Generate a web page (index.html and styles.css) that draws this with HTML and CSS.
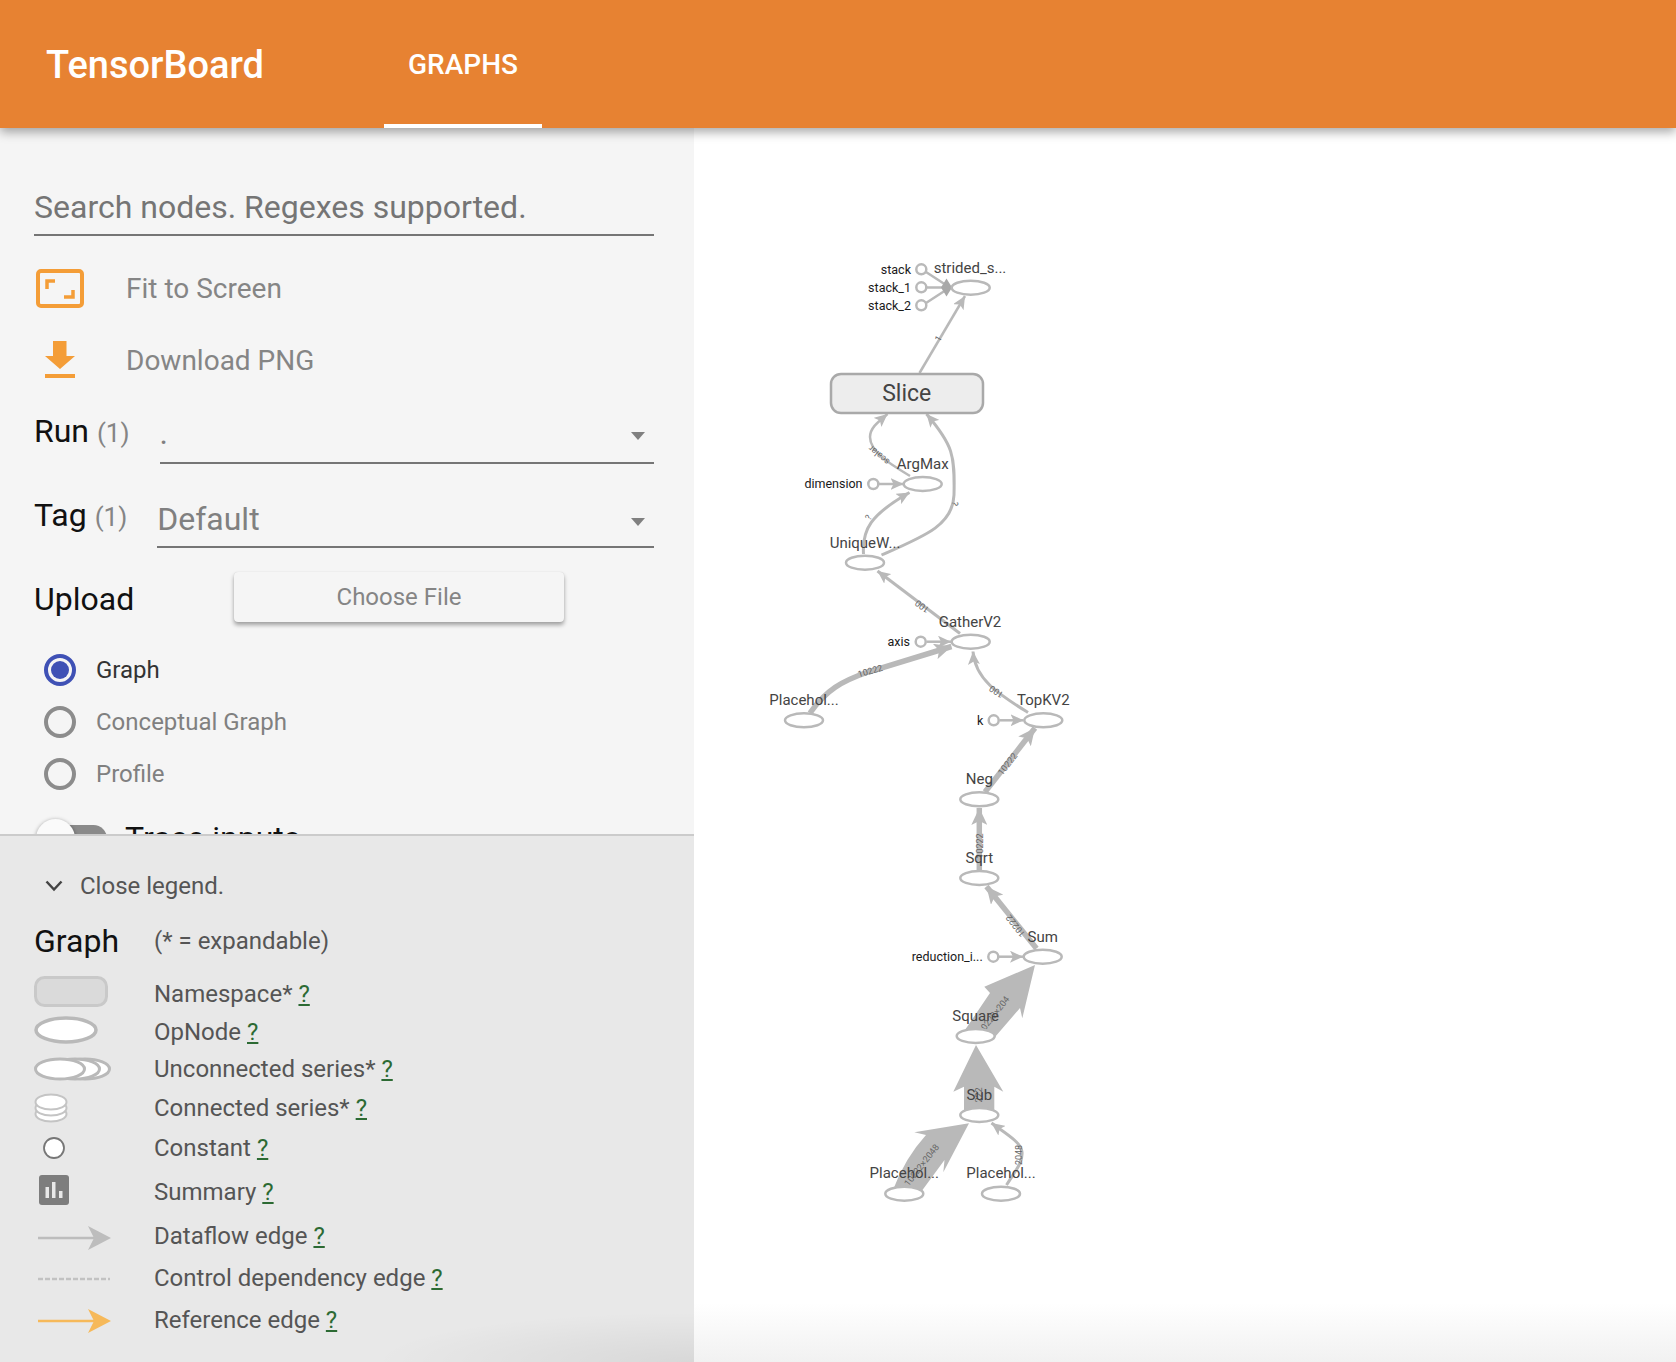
FILE: index.html
```html
<!DOCTYPE html>
<html lang="en">
<head>
    <meta charset="UTF-8">
    <title>TensorBoard</title>
    <link rel="stylesheet" href="styles.css">
</head>
<body>
    <header class="topbar">
        <div class="brand">TensorBoard</div>
        <div class="tab">GRAPHS</div>
    </header>

    <div class="main">
        <aside class="sidebar">
            <div class="controls">
                <div class="search">Search nodes. Regexes supported.</div>

                <div class="tools">
                    <div class="tool-row">
                        <svg class="tool-icon" width="48" height="39" viewBox="0 0 48 39">
                            <rect x="2" y="2" width="44" height="35" rx="3" fill="none" stroke="#f49d37" stroke-width="4"/>
                            <path d="M11 20V12H19M37 21V28H28" fill="none" stroke="#f49d37" stroke-width="3.5"/>
                        </svg>
                        <span>Fit to Screen</span>
                    </div>
                    <div class="tool-row">
                        <svg class="tool-icon download-icon" width="48" height="37" viewBox="0 0 48 37">
                            <path d="M17 0H30.500V15H39L24 28L9 15H17Z" fill="#f49d37"/>
                            <rect x="9" y="33" width="30" height="4" fill="#f49d37"/>
                        </svg>
                        <span>Download PNG</span>
                    </div>
                </div>

                <div class="pick-row run-row">
                    <div class="pick-label">Run <span class="count">(1)</span></div>
                    <div class="select"><span>.</span><i class="caret"></i></div>
                </div>
                <div class="pick-row tag-row">
                    <div class="pick-label">Tag <span class="count">(1)</span></div>
                    <div class="select"><span>Default</span><i class="caret"></i></div>
                </div>

                <div class="upload-row">
                    <div class="upload-label">Upload</div>
                    <div class="file-btn">Choose File</div>
                </div>

                <div class="radios">
                    <div class="radio-row on"><i class="radio"></i><span>Graph</span></div>
                    <div class="radio-row"><i class="radio"></i><span>Conceptual Graph</span></div>
                    <div class="radio-row"><i class="radio"></i><span>Profile</span></div>
                </div>

                <div class="toggle-row">
                    <div class="toggle"><i class="knob"></i></div>
                    <span>Trace inputs</span>
                </div>
            </div>

            <div class="legend">
                <div class="legend-toggle">
                    <svg width="18" height="12" viewBox="0 0 18 12">
                        <path d="M1.500 1.500L9 9.500L16.500 1.500" fill="none" stroke="#444" stroke-width="2.500"/>
                    </svg>
                    <span>Close legend.</span>
                </div>
                <div class="legend-head">
                    <div class="legend-title">Graph</div>
                    <div>(* = expandable)</div>
                </div>
                <div class="legend-grid">
                    <svg class="up-2" width="76" height="32" viewBox="0 0 76 32">
                        <rect x="1.500" y="1.500" width="71" height="28" rx="9" fill="#dadada" stroke="#c9c9c9" stroke-width="3"/>
                    </svg>
                    <div>Namespace* <a>?</a></div>

                    <svg class="up-2" width="66" height="28" viewBox="0 0 66 28">
                        <ellipse cx="32" cy="14" rx="30" ry="12" fill="#fff" stroke="#b9b9b9" stroke-width="3.500"/>
                    </svg>
                    <div>OpNode <a>?</a></div>

                    <svg width="78" height="24" viewBox="0 0 78 24">
                        <ellipse cx="51" cy="12" rx="24.500" ry="10" fill="#fff" stroke="#b9b9b9" stroke-width="3"/>
                        <ellipse cx="41" cy="12" rx="24.500" ry="10" fill="#fff" stroke="#b9b9b9" stroke-width="3"/>
                        <ellipse cx="26" cy="12" rx="24.500" ry="10" fill="#fff" stroke="#b9b9b9" stroke-width="3"/>
                    </svg>
                    <div>Unconnected series* <a>?</a></div>

                    <svg width="36" height="30" viewBox="0 0 36 30">
                        <ellipse cx="17" cy="21" rx="15.500" ry="7.500" fill="#fff" stroke="#c4c4c4" stroke-width="2"/>
                        <ellipse cx="17" cy="15" rx="15.500" ry="7.500" fill="#fff" stroke="#c4c4c4" stroke-width="2"/>
                        <ellipse cx="17" cy="9" rx="15.500" ry="7.500" fill="#fff" stroke="#c4c4c4" stroke-width="2"/>
                    </svg>
                    <div>Connected series* <a>?</a></div>

                    <svg class="constant-icon" width="24" height="24" viewBox="0 0 24 24">
                        <circle cx="12" cy="12" r="10" fill="#fff" stroke="#777" stroke-width="1.800"/>
                    </svg>
                    <div>Constant <a>?</a></div>

                    <svg class="summary-icon" width="30" height="30" viewBox="0 0 30 30">
                        <rect width="30" height="30" rx="3" fill="#7d7d7d"/>
                        <rect x="6.500" y="12" width="3.500" height="11" fill="#e8e8e8"/>
                        <rect x="13" y="7" width="3.500" height="16" fill="#e8e8e8"/>
                        <rect x="20" y="16" width="3.500" height="7" fill="#e8e8e8"/>
                    </svg>
                    <div>Summary <a>?</a></div>

                    <svg class="edge-icon down-2" width="76" height="24" viewBox="0 0 76 24">
                        <path d="M0 12H60" stroke="#bdbdbd" stroke-width="2.500"/>
                        <path d="M50 0L73 12L50 24L56 12Z" fill="#bdbdbd"/>
                    </svg>
                    <div>Dataflow edge <a>?</a></div>

                    <svg class="edge-icon down-1" width="76" height="4" viewBox="0 0 76 4">
                        <path d="M0 2H72" stroke="#c2c2c2" stroke-width="2.500" stroke-dasharray="5 2"/>
                    </svg>
                    <div>Control dependency edge <a>?</a></div>

                    <svg class="edge-icon down-1" width="76" height="24" viewBox="0 0 76 24">
                        <path d="M0 12H60" stroke="#f6b95a" stroke-width="2.500"/>
                        <path d="M50 0L73 12L50 24L56 12Z" fill="#f6b95a"/>
                    </svg>
                    <div>Reference edge <a>?</a></div>
                </div>
            </div>
        </aside>

        <main class="canvas">
            <!-- viewBox uses page coordinates so the nodes read like the screenshot -->
            <svg class="graph" width="982" height="1234" viewBox="694 128 982 1234">
                <defs>
                    <marker id="head" markerUnits="userSpaceOnUse" markerWidth="14" markerHeight="12" refX="13" refY="6" orient="auto">
                        <path d="M0 0L13 6L0 12L3 6Z" fill="#b9b9b9"/>
                    </marker>
                    <marker id="head-wide" markerUnits="userSpaceOnUse" markerWidth="18" markerHeight="16" refX="17" refY="8" orient="auto">
                        <path d="M0 0L17 8L0 16L4 8Z" fill="#b9b9b9"/>
                    </marker>
                </defs>

                <g class="edges">
                    <path d="M926 272L946 285"/>
                    <path d="M927 287.500H946"/>
                    <path d="M926 303L946 290"/>
                    <polygon class="diamond" points="941,287.500 946.500,278.500 952,287.500 946.500,296.500"/>
                    <path d="M919.500 373L965 296" marker-end="url(#head)"/>
                    <path d="M910 476C890 464 870 452 870 437C870 428 878 422 887.500 414" marker-end="url(#head)"/>
                    <path d="M879 484H903.500" marker-end="url(#head)"/>
                    <path class="w3" d="M863.500 554C862 530 870 515 909.500 492.500" marker-end="url(#head)"/>
                    <path class="w3" d="M881.500 555C925 536 953 525 954 495C955 455 953 445 926.500 414" marker-end="url(#head)"/>
                    <path class="w3" d="M960 633.500L877.500 571" marker-end="url(#head)"/>
                    <path d="M926.500 641.700H951" marker-end="url(#head)"/>
                    <path class="w5" d="M810 713C826 690 842 681 868 672L951.500 646.500" marker-end="url(#head-wide)"/>
                    <path class="w3" d="M1028 712.500C1000 695 975 680 973 651.500" marker-end="url(#head)"/>
                    <path d="M999.500 720.300H1023.500" marker-end="url(#head)"/>
                    <path class="w5" d="M985 792L1035 728" marker-end="url(#head-wide)"/>
                    <path class="w5" d="M979.300 870V808" marker-end="url(#head-wide)"/>
                    <path class="w5" d="M1036.500 948.500L986.500 886.500" marker-end="url(#head-wide)"/>
                    <path d="M999 956.700H1023" marker-end="url(#head)"/>
                    <path class="w3" d="M1006.500 1185C1016 1170 1023 1162 1022 1152C1021 1142 1005 1133 991.500 1123" marker-end="url(#head)"/>
                    <polygon class="big" points="1035,965 1022.300,1018.300 1020,1008 995,1037 965,1030 990,993 984.300,986.700"/>
                    <polygon class="big" points="976,1045 1003.300,1091.700 994.300,1086.700 994.300,1110 964,1110 964,1086.700 953.300,1091.700"/>
                    <path class="big" d="M969 1123.300L914.300 1132.300L926 1135Q905 1158 893 1190L921 1192L944.500 1160L943.300 1172.300Z"/>
                </g>

                <g class="edge-labels">
                    <text transform="translate(941 340) rotate(-60)">1</text>
                    <text transform="translate(881 453) rotate(220)">scalar</text>
                    <text transform="translate(871 519) rotate(-60)">?</text>
                    <text transform="translate(952 503) rotate(100)">?</text>
                    <text transform="translate(924 604) rotate(217)">100</text>
                    <text transform="translate(871 674) rotate(-16)">10222</text>
                    <text transform="translate(998 689) rotate(213)">100</text>
                    <text transform="translate(1010 766) rotate(-52)">10222</text>
                    <text transform="translate(983 846) rotate(-90)">10222</text>
                    <text transform="translate(1018 924) rotate(232)">10222</text>
                    <text transform="translate(996 1017) rotate(-52)">10222×204</text>
                    <text transform="translate(982 1095) rotate(-90)">222</text>
                    <text transform="translate(924 1167) rotate(-52)">10222×2048</text>
                    <text transform="translate(1022 1155) rotate(-90)">2048</text>
                </g>

                <rect class="meta-node" x="831" y="374" width="152" height="39" rx="10"/>

                <g class="op-nodes">
                    <ellipse cx="970.700" cy="287.700" rx="19" ry="7"/>
                    <ellipse cx="922.700" cy="484" rx="19" ry="7"/>
                    <ellipse cx="865" cy="562.700" rx="19" ry="7"/>
                    <ellipse cx="970.700" cy="641.700" rx="19" ry="7"/>
                    <ellipse cx="804" cy="720.300" rx="19" ry="7"/>
                    <ellipse cx="1043.300" cy="720.300" rx="19" ry="7"/>
                    <ellipse cx="979.300" cy="799.300" rx="19" ry="7"/>
                    <ellipse cx="979.300" cy="878" rx="19" ry="7"/>
                    <ellipse cx="1042.700" cy="956.700" rx="19" ry="7"/>
                    <ellipse cx="975.700" cy="1036" rx="19" ry="7"/>
                    <ellipse cx="979.300" cy="1115" rx="19" ry="7"/>
                    <ellipse cx="904.300" cy="1193.700" rx="19" ry="7"/>
                    <ellipse cx="1001" cy="1193.700" rx="19" ry="7"/>
                </g>

                <g class="const-nodes">
                    <circle cx="921.300" cy="269.300" r="5"/>
                    <circle cx="921.300" cy="287.300" r="5"/>
                    <circle cx="921.300" cy="305.300" r="5"/>
                    <circle cx="873.300" cy="484" r="5"/>
                    <circle cx="920.700" cy="641.700" r="5"/>
                    <circle cx="993.700" cy="720.300" r="5"/>
                    <circle cx="993.300" cy="956.700" r="5"/>
                </g>

                <g class="const-labels">
                    <text x="911" y="274">stack</text>
                    <text x="911" y="292">stack_1</text>
                    <text x="911" y="310">stack_2</text>
                    <text x="862.500" y="488">dimension</text>
                    <text x="910" y="646">axis</text>
                    <text x="983.300" y="725">k</text>
                    <text x="982.700" y="961">reduction_i...</text>
                </g>

                <g class="node-labels">
                    <text x="970" y="273">strided_s...</text>
                    <text x="922.700" y="468.500">ArgMax</text>
                    <text x="865" y="548">UniqueW...</text>
                    <text x="970" y="627">GatherV2</text>
                    <text x="804" y="704.500">Placehol...</text>
                    <text x="1043.300" y="704.500">TopKV2</text>
                    <text x="979.300" y="783.500">Neg</text>
                    <text x="979.300" y="863">Sqrt</text>
                    <text x="1042.700" y="942">Sum</text>
                    <text x="975.700" y="1021">Square</text>
                    <text x="979.300" y="1100">Sub</text>
                    <text x="904.300" y="1177.500">Placehol...</text>
                    <text x="1001" y="1177.500">Placehol...</text>
                    <text class="meta-label" x="906.700" y="401">Slice</text>
                </g>
            </svg>
        </main>
    </div>
</body>
</html>
```

FILE: styles.css
```css
body {
    margin: 0;
    width: 1676px;
    height: 1362px;
    overflow: hidden;
    background-color: white;
    font-family: Roboto, sans-serif;
}
.topbar {
    position: relative;
    z-index: 2;
    display: flex;
    height: 128px;
    padding-left: 46px;
    background-color: #e78232;
    box-shadow: 0 4px 10px rgba(0,0,0,0.35);
    color: white;
    box-sizing: border-box;
}
.brand {
    width: 338px;
    font-size: 38px;
    font-weight: 500;
    line-height: 130px;
}
.tab {
    width: 158px;
    height: 128px;
    border-bottom: 4px solid white;
    box-sizing: border-box;
    font-size: 28px;
    font-weight: 500;
    line-height: 130px;
    text-align: center;
}
.main {
    display: flex;
    height: 1234px;
}
.sidebar {
    display: flex;
    flex-direction: column;
    width: 694px;
    flex: none;
    background-color: #f5f5f5;
}
.controls {
    height: 706px;
    flex: none;
    padding: 60px 40px 0 34px;
    box-sizing: border-box;
    overflow: hidden;
    color: #777;
}
.search {
    padding-bottom: 8px;
    border-bottom: 2px solid #757575;
    font-size: 32px;
    line-height: 38px;
    color: #757575;
}
.tools {
    margin-top: 16px;
}
.tool-row {
    display: flex;
    align-items: center;
    height: 72px;
    font-size: 28px;
    color: #858585;
}
.tool-icon {
    flex: none;
    margin-left: 2px;
    margin-right: 42px;
}
.download-icon {
    margin-bottom: 2px;
}
.pick-row {
    display: flex;
    align-items: flex-end;
    gap: 30px;
}
.pick-label {
    font-size: 32px;
    line-height: 38px;
    color: #111;
}
.run-row .pick-label {
    padding-bottom: 12px;
}
.tag-row .pick-label {
    padding-bottom: 12px;
}
.count {
    font-size: 26px;
    color: #858585;
}
.select {
    display: flex;
    flex: 1;
    align-items: center;
    justify-content: space-between;
    padding-right: 9px;
    border-bottom: 2px solid #757575;
    font-size: 32px;
    line-height: 38px;
    color: #808080;
}
.run-row .select {
    padding-top: 18px;
    padding-bottom: 10px;
}
.tag-row .select {
    padding-top: 36px;
    padding-bottom: 8px;
}
.caret {
    width: 0;
    height: 0;
    margin-top: 6px;
    border-left: 7px solid transparent;
    border-right: 7px solid transparent;
    border-top: 8px solid #808080;
}
.upload-row {
    display: flex;
    align-items: center;
    margin-top: 24px;
}
.upload-label {
    width: 200px;
    padding-top: 3px;
    font-size: 32px;
    color: #111;
}
.file-btn {
    width: 330px;
    height: 50px;
    border-radius: 4px;
    background-color: #f5f5f5;
    box-shadow: 0 3px 4px rgba(0,0,0,0.35), 0 0 1px rgba(0,0,0,0.15);
    font-size: 24px;
    line-height: 50px;
    text-align: center;
    color: #858585;
}
.radios {
    margin-top: 22px;
}
.radio-row {
    display: flex;
    align-items: center;
    height: 52px;
    padding-left: 10px;
    gap: 20px;
    font-size: 24px;
    color: #808080;
}
.radio {
    position: relative;
    width: 32px;
    height: 32px;
    border: 4px solid #8c8c8c;
    border-radius: 50%;
    box-sizing: border-box;
}
.radio-row.on {
    color: #333;
}
.radio-row.on .radio {
    border-color: #3f51b5;
}
.radio-row.on .radio::after {
    content: "";
    position: absolute;
    top: 3px;
    left: 3px;
    width: 18px;
    height: 18px;
    border-radius: 50%;
    background-color: #3f51b5;
}
.toggle-row {
    display: flex;
    align-items: flex-start;
    gap: 18px;
    margin-top: 19px;
    padding-left: 2px;
    font-size: 32px;
    line-height: 22px;
    color: #111;
}
.toggle-row span {
    margin-top: 8px;
}
.toggle {
    position: relative;
    width: 71px;
    height: 27px;
    margin-top: 6px;
    border-radius: 14px;
    background-color: #8a8a8a;
}
.knob {
    position: absolute;
    top: -6px;
    left: 0;
    width: 39px;
    height: 39px;
    border-radius: 50%;
    background-color: #fafafa;
    box-shadow: 0 1px 4px rgba(0,0,0,0.4);
}
.legend {
    position: relative;
    flex: 1;
    padding: 0 34px;
    border-top: 2px solid #cbcbcb;
    background-color: #e8e8e8;
    background-image: radial-gradient(ellipse 320px 50px at 100% 100%, rgba(0,0,0,0.07), transparent);
    font-size: 24px;
    color: #555;
}
.legend-toggle {
    display: flex;
    align-items: center;
    gap: 17px;
    height: 44px;
    margin-top: 28px;
    padding-left: 11px;
}
.legend-head {
    display: flex;
    align-items: center;
    height: 44px;
    margin-top: 11px;
}
.legend-title {
    width: 120px;
    font-size: 32px;
    color: #111;
}
.legend-grid {
    display: grid;
    grid-template-columns: 120px 1fr;
    grid-template-rows: 38px 37px 38px 39px 42px 45px 43px 42px 42px;
    align-items: center;
    margin-top: 12px;
}
.legend-grid a {
    color: #2c6a33;
    text-decoration: underline;
}
.up-2 {
    margin-bottom: 4px;
}
.down-1 {
    margin-top: 2px;
}
.down-2 {
    margin-top: 4px;
}
.constant-icon {
    margin-left: 8px;
}
.summary-icon {
    margin-bottom: 3px;
    margin-left: 5px;
}
.edge-icon {
    margin-left: 4px;
}
.canvas {
    position: relative;
    flex: 1;
    background-image: linear-gradient(to bottom, white 1175px, #f1f1f1);
}
.graph {
    display: block;
}
.edges path,
.edges polygon {
    fill: none;
    stroke: #b9b9b9;
    stroke-width: 2.5;
}
.edges .w3 {
    stroke-width: 3;
}
.edges .w5 {
    stroke-width: 5.5;
}
.edges .big {
    fill: #b9b9b9;
    stroke: none;
}
.edges .diamond {
    fill: #a8a8a8;
    stroke: none;
}
.edge-labels text {
    font-size: 9px;
    text-anchor: middle;
    fill: #666;
}
.meta-node {
    fill: #ededed;
    stroke: #a9a9a9;
    stroke-width: 2.5;
}
.op-nodes ellipse,
.const-nodes circle {
    fill: white;
    stroke: #b9b9b9;
    stroke-width: 2.5;
}
.const-labels text {
    font-size: 12.5px;
    text-anchor: end;
    fill: #1a1a1a;
}
.node-labels text {
    font-size: 15px;
    text-anchor: middle;
    fill: #444;
}
.node-labels .meta-label {
    font-size: 23px;
}
```
